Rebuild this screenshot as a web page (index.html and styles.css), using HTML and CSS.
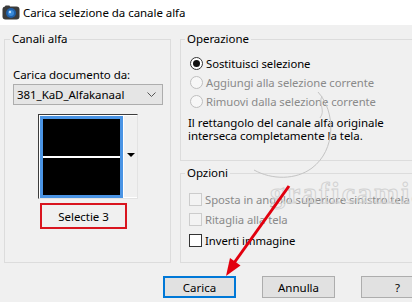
FILE: index.html
```html
<!DOCTYPE html>
<html>
<head>
<meta charset="utf-8">
<title>Carica selezione da canale alfa</title>
<link rel="stylesheet" href="styles.css">
</head>
<body>
<div class="window">
  <div class="titlebar">
    <svg class="app-icon" width="18" height="16" viewBox="0 0 18 16">
      <rect x="0.5" y="1.5" width="17" height="13" rx="3" fill="#3b3b3b"/>
      <rect x="3" y="0.5" width="5" height="3" rx="1" fill="#3b3b3b"/>
      <circle cx="9" cy="8" r="5" fill="#1f5fa8"/>
      <circle cx="9" cy="8" r="3" fill="#3a8ad8"/>
      <circle cx="8" cy="7" r="1.2" fill="#bfe0ff"/>
    </svg>
    <span class="title">Carica selezione da canale alfa</span>
  </div>

  <div class="content">
    <div class="groups">
      <fieldset class="group left-group">
        <legend>Canali alfa</legend>
        <div class="left-inner">
          <div class="field-label">Carica documento da:</div>
          <div class="select">
            <span>381_KaD_Alfakanaal</span>
            <svg class="chev" width="9" height="5" viewBox="0 0 9 5"><path d="M0.5 0.5 L4.5 4.5 L8.5 0.5" fill="none" stroke="#555" stroke-width="1"/></svg>
          </div>
          <div class="preview">
            <div class="thumb"><div class="thumb-line"></div></div>
            <div class="thumb-drop"><span class="tri"></span></div>
          </div>
          <div class="sel-name">Selectie 3</div>
        </div>
      </fieldset>

      <div class="right-col">
        <fieldset class="group op-group">
          <legend>Operazione</legend>
          <div class="op-inner">
            <div class="opt-row"><span class="radio checked"></span><span>Sostituisci selezione</span></div>
            <div class="opt-row disabled"><span class="radio"></span><span>Aggiungi alla selezione corrente</span></div>
            <div class="opt-row disabled"><span class="radio"></span><span>Rimuovi dalla selezione corrente</span></div>
            <p class="note">Il rettangolo del canale alfa originale<br>interseca completamente la tela.</p>
          </div>
        </fieldset>
        <fieldset class="group opt-group">
          <legend>Opzioni</legend>
          <div class="opt-inner">
            <div class="opt-row check-row disabled"><span class="check"></span><span>Sposta in angolo superiore sinistro tela</span></div>
            <div class="opt-row check-row disabled"><span class="check"></span><span>Ritaglia alla tela</span></div>
            <div class="opt-row check-row"><span class="check"></span><span>Inverti immagine</span></div>
          </div>
        </fieldset>
      </div>
    </div>

    <div class="buttons">
      <button class="btn default">Carica</button>
      <button class="btn">Annulla</button>
      <button class="btn">?</button>
    </div>
  </div>

  <svg class="overlay" width="412" height="302" viewBox="0 0 412 302">
    <path d="M318 92 C336 112, 336 150, 312 168 C296 180, 272 180, 254 170" fill="none" stroke="#c4c4c4" stroke-width="1"/>
    <path d="M322 96 C318 104, 326 110, 320 118" fill="none" stroke="#cacaca" stroke-width="1"/>
    <text x="270" y="203" class="wm">graficamia</text>
    <line x1="289" y1="186" x2="234" y2="263" stroke="#e2000e" stroke-width="3"/>
    <polygon points="226,276 240.5,265.5 230,258" fill="#e2000e"/>
  </svg>
</div>
</body>
</html>
```

FILE: styles.css
```css
* { box-sizing: border-box; }
html, body { margin: 0; padding: 0; }
body {
  width: 412px;
  height: 302px;
  overflow: hidden;
  background: #f0f0f0;
  font-family: "Noto Sans", "DejaVu Sans", sans-serif;
  font-size: 11.3px;
  letter-spacing: -0.05px;
  color: #000;
}
.window { position: relative; width: 412px; height: 302px; overflow: hidden; }

.titlebar {
  height: 25px;
  background: #fff;
  display: flex;
  align-items: center;
  padding-left: 2px;
  gap: 3px;
}
.app-icon { flex: none; }
.title { font-size: 11.5px; line-height: 14px; }

.content { padding: 7px 0 0 4px; }
.groups { display: flex; gap: 9px; }

.group {
  margin: 0;
  padding: 0;
  border: 1px solid #dcdcdc;
  min-width: 0;
}
.group legend {
  padding: 0 2px;
  margin-left: 4px;
  line-height: 14px;
  font-size: 11.5px;
}
.left-group { width: 167px; height: 231px; flex: none; }
.left-group legend { margin-left: 5px; }

.left-inner { padding: 22px 0 0 8px; }
.field-label { line-height: 14px; height: 14px; font-size: 11.5px; }
.select {
  margin-top: 2px;
  width: 150px;
  height: 21px;
  border: 1px solid #adadad;
  background: #e5e5e5;
  display: flex;
  align-items: center;
  justify-content: space-between;
  padding: 0 6px 0 3px;
  font-size: 11.5px;
}
.chev { flex: none; }

.preview {
  margin: 9px 0 0 25px;
  width: 100px;
  height: 85px;
  display: flex;
  border-style: solid;
  border-width: 1px;
  border-color: #3c3c3c #e3e3e3 #e3e3e3 #3c3c3c;
  background: #fff;
  padding: 1px 0 1px 1px;
}
.thumb {
  width: 83px;
  height: 82px;
  background: #000;
  border: 3px solid #4a94e4;
  padding-top: 37px;
  flex: none;
}
.thumb-line { height: 2px; background: #fff; }
.thumb-drop {
  flex: 1;
  background: #f0f0f0;
  border-left: 1px solid #fff;
  display: flex;
  align-items: center;
  justify-content: center;
  padding-bottom: 4px;
}
.tri {
  width: 0;
  height: 0;
  border-left: 4px solid transparent;
  border-right: 4px solid transparent;
  border-top: 4px solid #000;
}
.sel-name {
  margin: 4px 0 0 27px;
  width: 87px;
  height: 26px;
  border: 2px solid #d9151f;
  display: flex;
  align-items: center;
  justify-content: center;
  font-size: 11.5px;
}

.right-col {
  display: flex;
  flex-direction: column;
  gap: 5px;
  width: 250px;
  flex: none;
}
.op-group { height: 129px; }
.opt-group { height: 97px; }

.op-inner { padding: 8px 0 0 9px; }
.opt-row {
  display: flex;
  align-items: center;
  gap: 3px;
  height: 19px;
  white-space: nowrap;
}
.opt-row.disabled { color: #8a8a8a; }
.radio {
  width: 13px;
  height: 13px;
  border-radius: 50%;
  border: 1px solid #333;
  background: #fff;
  flex: none;
  position: relative;
}
.radio.checked::after {
  content: "";
  position: absolute;
  left: 2px;
  top: 2px;
  width: 7px;
  height: 7px;
  border-radius: 50%;
  background: #111;
}
.disabled .radio { border-color: #bfbfbf; background: #f7f7f7; }
.note {
  margin: 5px 0 0 -2px;
  line-height: 13px;
  white-space: nowrap;
  font-size: 11.5px;
}

.opt-inner { padding: 9px 0 0 8px; }
.check-row { height: 20.5px; }
.check {
  width: 13px;
  height: 13px;
  border: 1px solid #333;
  background: #fff;
  flex: none;
}
.disabled .check { border-color: #cccccc; background: #f3f3f3; }

.buttons {
  display: flex;
  gap: 26px;
  margin: 13px 0 0 159px;
}
.btn {
  width: 73px;
  height: 22px;
  flex: none;
  border: 1px solid #adadad;
  background: #e1e1e1;
  font-family: inherit;
  font-size: 11.5px;
  color: #000;
  padding: 0;
}
.btn.default { border: 2px solid #0078d7; }

.overlay { position: absolute; left: 0; top: 0; pointer-events: none; }
.wm {
  font-family: "Liberation Serif", serif;
  font-weight: bold;
  font-size: 30px;
  fill: none;
  stroke: #d2d2d2;
  stroke-width: 1;
  letter-spacing: 2px;
}
```
